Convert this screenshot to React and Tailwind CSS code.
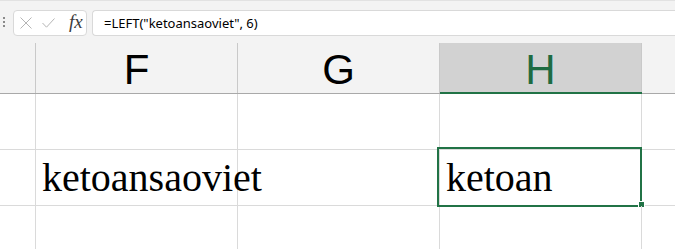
import React from "react";

const cols = ["F", "G", "H"];

function Dots() {
  return (
    <div className="flex flex-col gap-[2px] w-[2px] ml-[3px] mt-[7px] self-start">
      <span className="block w-[2px] h-[2px] bg-[#8a8a8a]" />
      <span className="block w-[2px] h-[2px] bg-[#8a8a8a]" />
      <span className="block w-[2px] h-[2px] bg-[#8a8a8a]" />
    </div>
  );
}

function FormulaBar() {
  return (
    <div className="h-[43px] bg-[#f3f3f3] border-t border-[#e2e2e2] flex items-start pt-[9px]">
      <Dots />
      <div className="ml-[8px] w-[74px] h-[26px] bg-white border border-[#d9d9d9] rounded-[4px] flex items-center">
        <svg width="12" height="12" viewBox="0 0 12 12" className="ml-[6px]">
          <path d="M0.5 0.5 L11.5 11.5 M11.5 0.5 L0.5 11.5" stroke="#b5b5b5" strokeWidth="1" fill="none" />
        </svg>
        <svg width="13" height="10" viewBox="0 0 13 10" className="ml-[10px]">
          <path d="M0.5 5 L4.5 9.2 L12.5 0.5" stroke="#b5b5b5" strokeWidth="1" fill="none" />
        </svg>
        <span
          className="ml-[14px] text-[19px] leading-none italic text-[#3c3c3c] -mt-[3px]"
          style={{ fontFamily: '"Liberation Serif", serif' }}
        >
          fx
        </span>
      </div>
      <div className="ml-[5px] flex-1 h-[26px] bg-white border border-r-0 border-[#d9d9d9] rounded-l-[4px] flex items-center pl-[11px]">
        <span className="text-[13px] text-black font-['Noto_Sans',sans-serif] leading-none">
          =LEFT("ketoansaoviet", 6)
        </span>
      </div>
    </div>
  );
}

function HeaderRow() {
  return (
    <div className="flex h-[51px] bg-[#f3f3f3] border-b border-[#a9a9a9]">
      <div className="w-[36px] border-r border-[#c9c9c9]" />
      {cols.map((c) => (
        <div
          key={c}
          className={
            c === "H"
              ? "relative w-[202px] border-r border-[#c9c9c9] bg-[#d2d2d2] text-[#1e6b41] text-center leading-none pt-[6px]"
              : "w-[202px] border-r border-[#c9c9c9] text-black text-center leading-none pt-[6px]"
          }
          style={{ fontFamily: '"Liberation Sans", Arial, sans-serif', fontSize: 42 }}
        >
          {c}
          {c === "H" && <span className="absolute left-0 right-[-1px] bottom-[-1px] h-[2px] bg-[#217346]" />}
        </div>
      ))}
      <div className="flex-1" />
    </div>
  );
}

function Row({ f, h, selected }) {
  return (
    <div className="flex h-[56px] border-b border-[#dadada]">
      <div className="w-[36px] border-r border-[#dadada]" />
      <div
        className="w-[202px] border-r border-[#dadada] pl-[6px] pt-[5px] text-black text-[40px] leading-[46px] whitespace-nowrap"
        style={{ fontFamily: '"Liberation Serif", "Times New Roman", serif' }}
      >
        {f}
      </div>
      <div className="w-[202px] border-r border-[#dadada]" />
      <div
        className="relative w-[202px] border-r border-[#dadada] pl-[6px] pt-[5px] text-black text-[40px] leading-[46px] whitespace-nowrap"
        style={{ fontFamily: '"Liberation Serif", "Times New Roman", serif' }}
      >
        {h}
        {selected && (
          <>
            <div className="absolute -left-[3px] -top-[3px] w-[205px] h-[60px] border-2 border-[#217346]" />
            <div className="absolute left-[198px] top-[51px] w-[7px] h-[7px] bg-[#217346] border border-white" />
          </>
        )}
      </div>
      <div className="flex-1" />
    </div>
  );
}

export default function App() {
  return (
    <div className="w-[675px] h-[249px] overflow-hidden bg-white">
      <FormulaBar />
      <HeaderRow />
      <Row />
      <Row f="ketoansaoviet" h="ketoan" selected />
      <Row />
    </div>
  );
}
